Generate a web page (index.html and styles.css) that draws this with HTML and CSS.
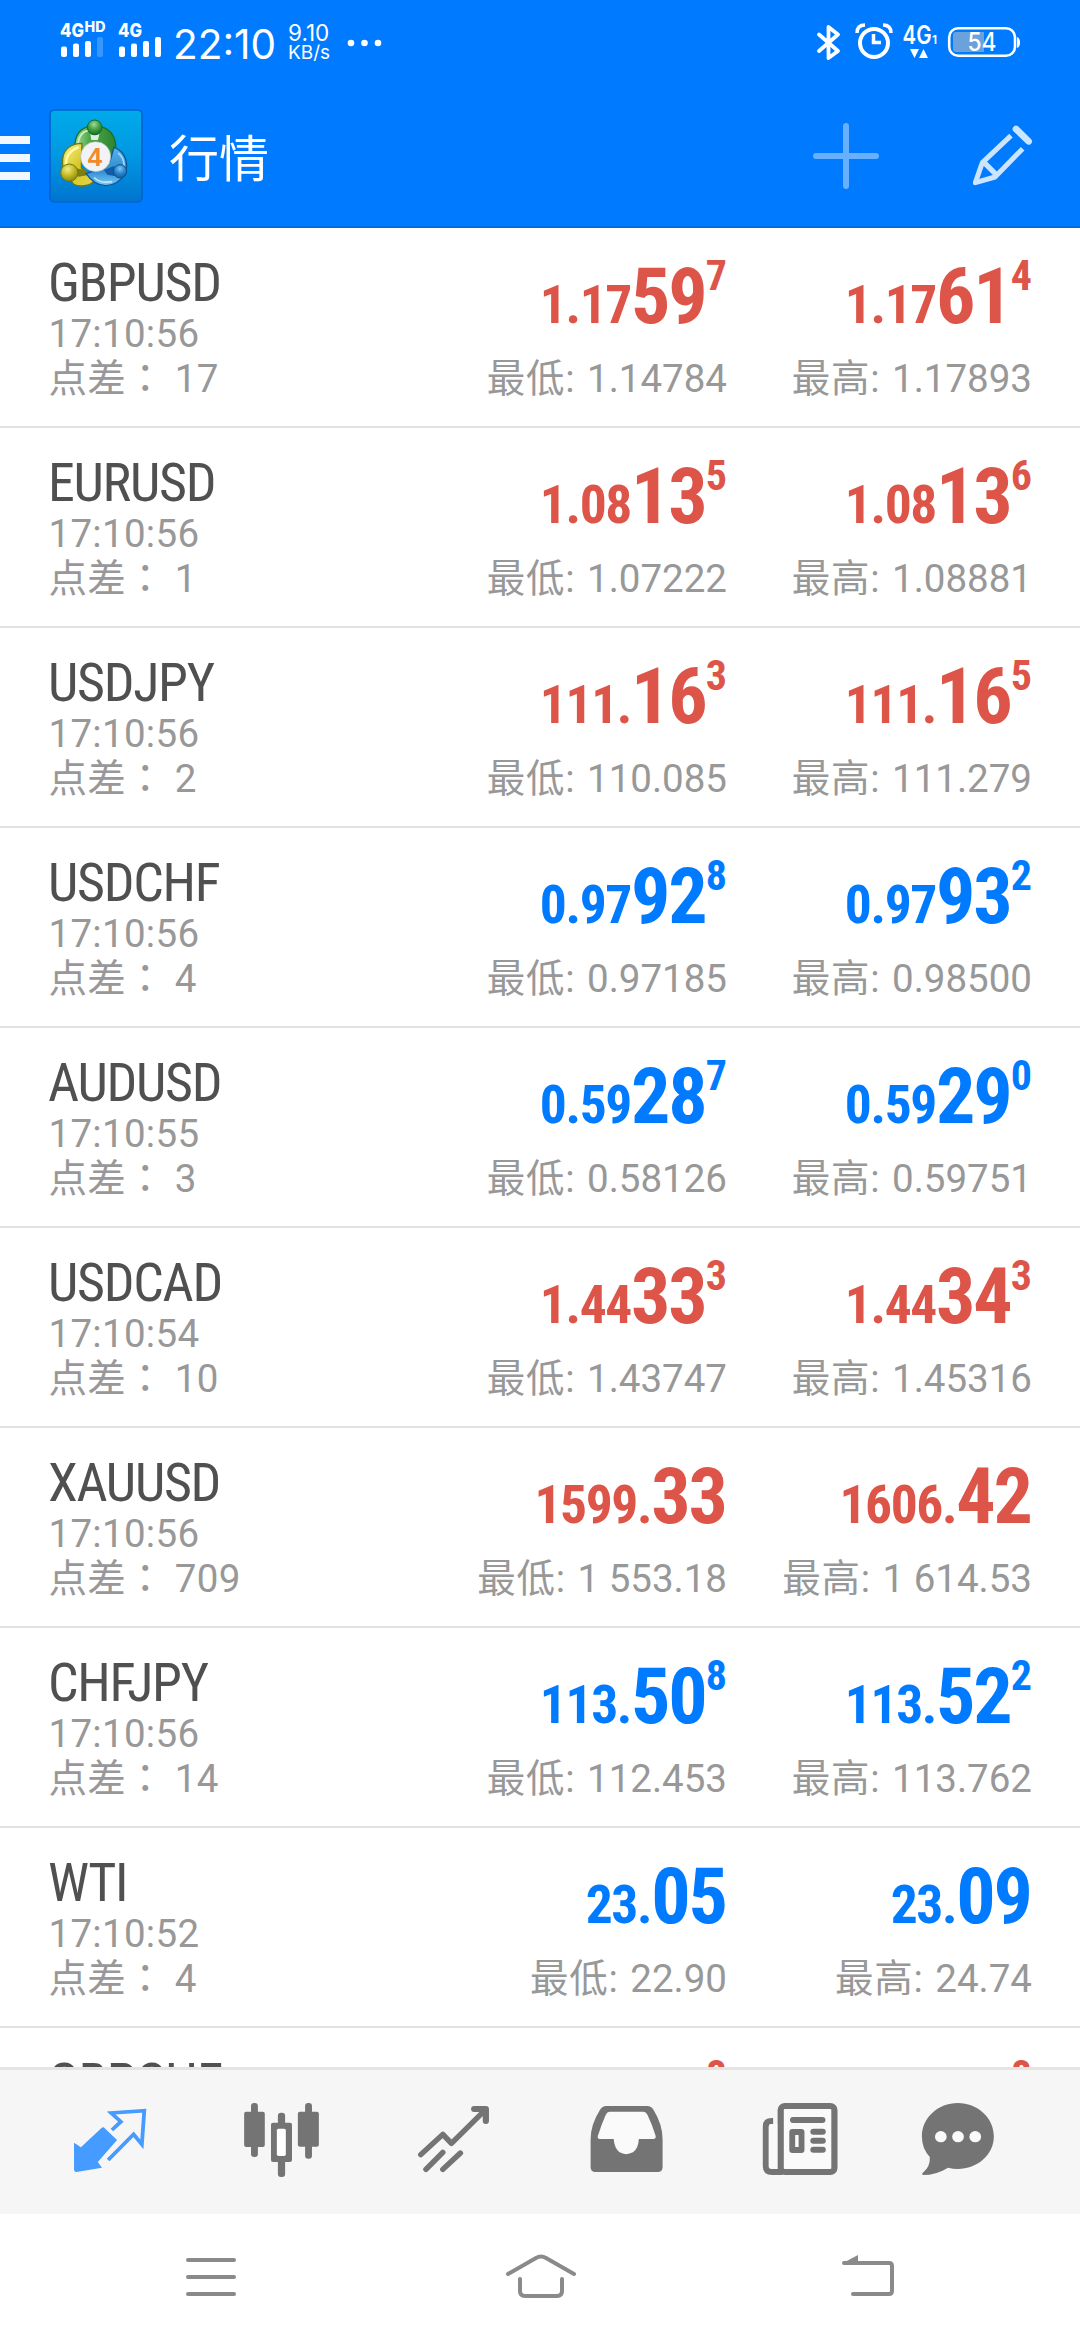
FILE: index.html
```html
<!DOCTYPE html>
<html lang="zh-CN">
<head>
<meta charset="utf-8">
<title>行情</title>
<link rel="stylesheet" href="styles.css">
</head>
<body>
<div class="screen">
  <header class="header">
    <div class="status">
      <svg class="signals" viewBox="50 0 120 84" width="120" height="84">
        <g fill="#fff">
          <g class="net"><text x="60" y="36.5" textLength="24" lengthAdjust="spacingAndGlyphs">4G</text><text x="118" y="36.5" textLength="24" lengthAdjust="spacingAndGlyphs">4G</text></g>
          <text class="hd" x="84.500" y="32" textLength="21" lengthAdjust="spacingAndGlyphs">HD</text>
          <rect x="61" y="46.500" width="6" height="10.500" rx="2"/><rect x="73" y="43.500" width="6" height="13.500" rx="2"/><rect x="85" y="41" width="6" height="16" rx="2"/><rect x="97" y="37" width="6" height="20" rx="2" opacity=".22"/>
          <rect x="119" y="46.500" width="6" height="10.500" rx="2"/><rect x="131" y="43.500" width="6" height="13.500" rx="2"/><rect x="143" y="41" width="6" height="16" rx="2"/><rect x="155" y="37" width="6" height="20" rx="2"/>
        </g>
      </svg>
      <span class="clock">22:10</span>
      <span class="speed"><span class="rate">9.10</span><span>KB/s</span></span>
      <svg class="dots" viewBox="340 0 50 84" width="50" height="84"><g fill="#fff"><circle cx="351" cy="43" r="3.300"/><circle cx="364.500" cy="43" r="3.300"/><circle cx="378" cy="43" r="3.300"/></g></svg>
      <svg class="indicators" viewBox="810 0 220 84" width="220" height="84">
        <path d="M819 34.500 838 51 828.500 58V27L838 34.500 819 51" fill="none" stroke="#fff" stroke-width="3.800" stroke-linejoin="round" stroke-linecap="round"/>
        <circle cx="874" cy="43" r="14" fill="none" stroke="#fff" stroke-width="4"/>
        <path d="M873.500 34v8.500h7.500" fill="none" stroke="#fff" stroke-width="3.500"/>
        <path d="M857 33q0-8 8-8M891 33q0-8-8-8" fill="none" stroke="#fff" stroke-width="3.500"/>
        <text class="lte" x="902.500" y="44" textLength="29" lengthAdjust="spacingAndGlyphs">4G</text>
        <text class="sub" x="932" y="44">1</text>
        <path d="M910 49h9l-4.500 9zM919 58h9l-4.500-9z" fill="#fff"/>
        <path d="M953 35q0-3 3-3h28v20h-28q-3 0-3-3z" fill="#6ba2dc"/>
        <rect x="949.200" y="28.200" width="65.800" height="27.500" rx="9" fill="none" stroke="#fff" stroke-width="2.600"/>
        <path d="M1017 37q3 1 3 5.500t-3 5.500z" fill="#fff"/>
        <text class="charge" x="967.500" y="51" textLength="29" lengthAdjust="spacingAndGlyphs">54</text>
      </svg>
    </div>
    <div class="appbar">
      <svg class="burger" viewBox="0 0 30 44" width="30" height="44"><path d="M0 4h30M0 22h30M0 40h30" stroke="#f1f8ff" stroke-width="8"/></svg>
      <svg class="logo" viewBox="13 13 282 282" width="94" height="94">
        <defs>
          <linearGradient id="bg" x2="0" y2="1"><stop offset="0" stop-color="#00aaea"/><stop offset=".5" stop-color="#0098e2"/><stop offset="1" stop-color="#0074cf"/></linearGradient>
          <radialGradient id="gn" cx=".45" cy=".3" r=".7"><stop offset="0" stop-color="#9fdc98"/><stop offset=".5" stop-color="#46a345"/><stop offset="1" stop-color="#1b6f2b"/></radialGradient>
          <radialGradient id="yl" cx=".4" cy=".3" r=".75"><stop offset="0" stop-color="#f0ee8c"/><stop offset=".5" stop-color="#c6ba25"/><stop offset="1" stop-color="#7d8410"/></radialGradient>
          <radialGradient id="bl" cx=".5" cy=".3" r=".75"><stop offset="0" stop-color="#7cc8f4"/><stop offset=".5" stop-color="#2b86cc"/><stop offset="1" stop-color="#0a559f"/></radialGradient>
          <linearGradient id="gb"><stop offset="0" stop-color="#a5dc98"/><stop offset=".35" stop-color="#4fa848"/><stop offset="1" stop-color="#2c8530"/></linearGradient>
          <linearGradient id="yb" x2="1" y2="1"><stop offset="0" stop-color="#fbf485"/><stop offset=".5" stop-color="#d6c62a"/><stop offset="1" stop-color="#e5d648"/></linearGradient>
          <linearGradient id="bb" x2="0" y2="1"><stop offset="0" stop-color="#59b4ea"/><stop offset=".6" stop-color="#2d8bd0"/><stop offset="1" stop-color="#7cc9f6"/></linearGradient>
        </defs>
        <rect x="16" y="16" width="276" height="276" rx="13" fill="url(#bg)" stroke="#0065cc" stroke-width="5"/>
        <path d="M91 126C90 92 108 70 132 66H168C194 72 214 94 213 128Q212 152 200 168L104 168Q92 150 91 126z" fill="url(#gb)" stroke="#1b6f2d" stroke-width="4"/>
        <path d="M100 117Q104 84 130 77" fill="none" stroke="#d0efc9" stroke-width="5" stroke-linecap="round"/>
        <path d="M112 116C80 116 56 134 54 164Q52 184 60 200L86 238Q104 248 130 241 148 234 154 220L110 190z" fill="url(#yb)" stroke="#6c7913" stroke-width="4"/>
        <path d="M64 178Q64 142 100 128" fill="none" stroke="#fffbb0" stroke-width="7" stroke-linecap="round"/>
        <path d="M88 190 124 196 128 212 101 216z" fill="#7e7d12"/>
        <path d="M208 128C234 138 246 158 246 186L240 210Q218 242 184 243 148 242 124 206L160 196 196 170z" fill="url(#bb)" stroke="#0d569e" stroke-width="4"/>
        <path d="M150 220Q168 237 200 231" fill="none" stroke="#bde6ff" stroke-width="5" stroke-linecap="round"/>
        <path d="M222 146Q238 160 238 182" fill="none" stroke="#a2d9fa" stroke-width="5" stroke-linecap="round"/>
        <path d="M178 196 208 184 210 214 188 210z" fill="#125ca8"/>
        <path d="M137 88Q150 96 164 88L160 106H140z" fill="#dceee1"/>
        <circle cx="150" cy="68" r="22" fill="url(#gn)" stroke="#17672a" stroke-width="3"/>
        <circle cx="74" cy="204" r="26" fill="url(#yl)" stroke="#74780d" stroke-width="3"/>
        <circle cx="226" cy="200" r="20" fill="url(#bl)" stroke="#0b4f91" stroke-width="3"/>
        <circle cx="153" cy="156" r="45" fill="#f2f3f6" stroke="#a9b9bd" stroke-width="2"/>
        <text class="four" x="129" y="183" textLength="43" lengthAdjust="spacingAndGlyphs">4</text>
      </svg>
      <h1 class="title">行情</h1>
      <svg class="plus" viewBox="0 0 66 66" width="66" height="66"><path d="M3 33h60M33 3v60" stroke="#66b0ff" stroke-width="6" stroke-linecap="round"/></svg>
      <svg class="pencil" viewBox="39 30 180 183" width="60" height="61">
        <path d="M153 62 67 143 46 203 105 186 188 101" fill="none" stroke="#cce5ff" stroke-width="15" stroke-linejoin="round"/>
        <path d="M72 142 108 178" stroke="#cce5ff" stroke-width="16"/>
        <path d="M168 42 206 79" stroke="#cce5ff" stroke-width="20" stroke-linecap="round"/>
      </svg>
    </div>
  </header>
  <main class="list">
    <section class="row down"><div class="info"><div class="symbol">GBPUSD</div><div class="meta">17:10:56</div><div class="meta">点差<i lang="zh-Hant">：</i> 17</div></div><div class="quote"><div class="price"><small>1.17</small>59<sup>7</sup></div><div class="meta"><b>最低:</b> 1.14784</div></div><div class="quote"><div class="price"><small>1.17</small>61<sup>4</sup></div><div class="meta"><b>最高:</b> 1.17893</div></div></section>
    <section class="row down"><div class="info"><div class="symbol">EURUSD</div><div class="meta">17:10:56</div><div class="meta">点差<i lang="zh-Hant">：</i> 1</div></div><div class="quote"><div class="price"><small>1.08</small>13<sup>5</sup></div><div class="meta"><b>最低:</b> 1.07222</div></div><div class="quote"><div class="price"><small>1.08</small>13<sup>6</sup></div><div class="meta"><b>最高:</b> 1.08881</div></div></section>
    <section class="row down"><div class="info"><div class="symbol">USDJPY</div><div class="meta">17:10:56</div><div class="meta">点差<i lang="zh-Hant">：</i> 2</div></div><div class="quote"><div class="price"><small>111.</small>16<sup>3</sup></div><div class="meta"><b>最低:</b> 110.085</div></div><div class="quote"><div class="price"><small>111.</small>16<sup>5</sup></div><div class="meta"><b>最高:</b> 111.279</div></div></section>
    <section class="row up"><div class="info"><div class="symbol">USDCHF</div><div class="meta">17:10:56</div><div class="meta">点差<i lang="zh-Hant">：</i> 4</div></div><div class="quote"><div class="price"><small>0.97</small>92<sup>8</sup></div><div class="meta"><b>最低:</b> 0.97185</div></div><div class="quote"><div class="price"><small>0.97</small>93<sup>2</sup></div><div class="meta"><b>最高:</b> 0.98500</div></div></section>
    <section class="row up"><div class="info"><div class="symbol">AUDUSD</div><div class="meta">17:10:55</div><div class="meta">点差<i lang="zh-Hant">：</i> 3</div></div><div class="quote"><div class="price"><small>0.59</small>28<sup>7</sup></div><div class="meta"><b>最低:</b> 0.58126</div></div><div class="quote"><div class="price"><small>0.59</small>29<sup>0</sup></div><div class="meta"><b>最高:</b> 0.59751</div></div></section>
    <section class="row down"><div class="info"><div class="symbol">USDCAD</div><div class="meta">17:10:54</div><div class="meta">点差<i lang="zh-Hant">：</i> 10</div></div><div class="quote"><div class="price"><small>1.44</small>33<sup>3</sup></div><div class="meta"><b>最低:</b> 1.43747</div></div><div class="quote"><div class="price"><small>1.44</small>34<sup>3</sup></div><div class="meta"><b>最高:</b> 1.45316</div></div></section>
    <section class="row down"><div class="info"><div class="symbol">XAUUSD</div><div class="meta">17:10:56</div><div class="meta">点差<i lang="zh-Hant">：</i> 709</div></div><div class="quote"><div class="price whole"><small>1599.</small>33</div><div class="meta"><b>最低:</b> 1 553.18</div></div><div class="quote"><div class="price whole"><small>1606.</small>42</div><div class="meta"><b>最高:</b> 1 614.53</div></div></section>
    <section class="row up"><div class="info"><div class="symbol">CHFJPY</div><div class="meta">17:10:56</div><div class="meta">点差<i lang="zh-Hant">：</i> 14</div></div><div class="quote"><div class="price"><small>113.</small>50<sup>8</sup></div><div class="meta"><b>最低:</b> 112.453</div></div><div class="quote"><div class="price"><small>113.</small>52<sup>2</sup></div><div class="meta"><b>最高:</b> 113.762</div></div></section>
    <section class="row up"><div class="info"><div class="symbol">WTI</div><div class="meta">17:10:52</div><div class="meta">点差<i lang="zh-Hant">：</i> 4</div></div><div class="quote"><div class="price whole"><small>23.</small>05</div><div class="meta"><b>最低:</b> 22.90</div></div><div class="quote"><div class="price whole"><small>23.</small>09</div><div class="meta"><b>最高:</b> 24.74</div></div></section>
    <section class="row down"><div class="info"><div class="symbol">GBPCHF</div></div><div class="quote"><div class="price"><small>1.15</small>15<sup>8</sup></div></div><div class="quote"><div class="price"><small>1.15</small>18<sup>8</sup></div></div></section>
  </main>
  <nav class="tabs">
    <svg viewBox="69.700 90 499.500 432" preserveAspectRatio="none">
      <path d="M301 262 340 300 284 366 296 383 222 396q-7 0-7-7V308l20 14 59-57q4-4 7-3z" fill="#459bff"/>
      <path d="M325 270 351 245 323 219 419 212 412 313 388 283 314 360" fill="none" stroke="#459bff" stroke-width="11"/>
    </svg>
    <svg viewBox="569.200 90 499.500 432" preserveAspectRatio="none">
      <g fill="#747474"><rect x="729" y="189" width="20" height="162" rx="9"/><rect x="709" y="215" width="60" height="106" rx="6"/><rect x="886" y="189" width="20" height="167" rx="9"/><rect x="865" y="215" width="61" height="105" rx="6"/><rect x="807" y="218" width="21" height="193" rx="9"/><rect x="787" y="248" width="61" height="118" rx="6"/></g><rect x="804" y="266" width="26" height="82" rx="5" fill="#fff"/>
    </svg>
    <svg viewBox="1068.700 90 499.500 432" preserveAspectRatio="none">
      <g fill="none" stroke="#747474" stroke-width="16" stroke-linecap="round" stroke-linejoin="round"><path d="M1222 344 1286 283 1311 310 1410 209"/><path d="M1377 207h34v36" stroke-width="18"/><path d="M1237 388 1286 337M1286 388 1337 339"/></g>
    </svg>
    <svg viewBox="0 90 499.500 432" preserveAspectRatio="none">
      <path d="M192 198H312q11 0 18 12Q356 254 356 298v84q0 14-14 14H161q-14 0-14-14V298q0-44 27-88 7-12 18-12z" fill="#747474"/><path d="M202 215h98q8 0 12 9 14 30 24 64 1 9-7 9h-42q-1 28-17 40-20 11-39 0-15-12-17-40h-40q-8 0-6-9 10-34 23-64 4-9 11-9z" fill="#fafafa"/>
    </svg>
    <svg viewBox="499.500 90 499.500 432" preserveAspectRatio="none">
      <g fill="none" stroke="#747474" stroke-width="18"><rect x="699" y="198" width="156" height="198" rx="12" fill="#fafafa"/><path d="M677 243h-4q-17 0-17 16V378q0 18 18 18h30"/><path d="M735 240h85M794 275h27M794 302h27M794 329h27" stroke-linecap="round"/></g><path d="M664 262q0-10 10-10h15v134h-18q-7 0-7-8z" fill="#fafafa"/><rect x="724" y="267" width="44" height="72" rx="9" fill="#747474"/><rect x="741" y="285" width="10" height="36" fill="#fafafa"/>
    </svg>
    <svg viewBox="999 90 499.500 432" preserveAspectRatio="none">
      <path d="M1213 189C1270 189 1318 233 1318 289S1270 387 1213 387q-14 0-28-4-34 22-73 22-5-3 0-7 22-18 20-47-23-25-23-62C1109 233 1157 189 1213 189z" fill="#747474"/><g fill="#fafafa"><circle cx="1164" cy="290" r="17"/><circle cx="1214" cy="290" r="17"/><circle cx="1264" cy="290" r="17"/></g>
    </svg>
  </nav>
  <footer class="sysnav">
    <svg viewBox="186 0 50 126" width="50" height="126"><path d="M188 46h46M188 63h46M188 80h46" stroke="#8a8a8a" stroke-width="4" stroke-linecap="round"/></svg>
    <svg class="home" viewBox="504 0 74 126" width="74" height="126"><path d="M508 60 536 44q5-3 10 0L574 60M520 65v12q0 5 5 5h32q5 0 5-5V65" fill="none" stroke="#8a8a8a" stroke-width="4" stroke-linecap="round"/></svg>
    <svg class="back" viewBox="840 0 58 126" width="58" height="126"><path d="M844 49h45q3 0 3 3v25q0 3-3 3h-36" fill="none" stroke="#8a8a8a" stroke-width="4" stroke-linecap="round"/><path d="M843 49 858 41v8z" fill="#8a8a8a"/></svg>
  </footer>
</div>
</body>
</html>
```
FILE: styles.css
```css
* { box-sizing: border-box; }
body { margin: 0; background: #fff; font-family: Roboto, "Noto Sans CJK SC", sans-serif; }
svg { display: block; flex: none; }
.screen { width: 1080px; height: 2340px; display: flex; flex-direction: column; overflow: hidden; }

.header { height: 228px; flex: none; background: #007aff; border-bottom: 2px solid #006be0; color: #fff; }
.status { height: 84px; display: flex; padding-left: 50px; font-family: Inter, sans-serif; }
.status text { fill: #fff; }
.net { font-size: 19px; font-weight: 800; }
.hd { font-size: 14px; font-weight: 800; }
.clock { width: 118px; padding-left: 3px; font-size: 40.5px; line-height: 90px; white-space: nowrap; }
.speed { width: 52px; padding-top: 23px; display: flex; flex-direction: column; font-size: 19px; line-height: 20px; }
.rate { font-size: 22.5px; }
.indicators { margin-left: 420px; }
.lte { font-size: 25px; font-weight: 600; }
.sub { font-size: 12px; font-weight: 600; }
.charge { font-size: 25px; font-weight: 500; }
.appbar { height: 142px; display: flex; align-items: center; }
.burger { margin-top: 6px; }
.logo { margin-left: 19px; margin-top: 1px; }
.four { font: 700 76px "Liberation Sans", sans-serif; fill: #f08a2c; }
.title { margin: 0 0 0 26px; font: 400 50px/70px "Noto Sans CJK SC", sans-serif; }
.plus { margin: 2px 0 0 auto; }
.pencil { margin: 1px 47px 0 94px; }

.list { flex: 1; min-height: 0; overflow: hidden; background: #fff; }
.row { height: 200px; display: flex; padding: 26px 48px 0 49px; border-bottom: 2px solid #e2e2e2; }
.info { flex: 1; }
.symbol { margin-left: -1px; font-family: "Roboto Condensed", Roboto, sans-serif; font-stretch: 75%; font-weight: 450; font-size: 54px; letter-spacing: -1.3px; line-height: 58px; color: #505050; }
.meta { font-size: 38.5px; line-height: 44.5px; color: #989898; white-space: pre; }
.info .meta { margin-left: -.5px; letter-spacing: .3px; }
.meta i { font-style: normal; font-family: "Noto Sans CJK TC", sans-serif; line-height: 0; }
.meta b { font-weight: 400; letter-spacing: .8px; margin-right: 2px; }
.quote { width: 305px; text-align: right; }
.price { height: 102.5px; padding-top: 3px; font-family: "Roboto Condensed", Roboto, sans-serif; font-stretch: 75%; font-weight: 700; font-size: 78px; letter-spacing: -2px; line-height: 80px; white-space: nowrap; }
.price small { font-size: 53.5px; letter-spacing: -1.4px; line-height: 0; }
.price sup { font-size: 42px; letter-spacing: 0; line-height: 0; vertical-align: 33px; }
.whole { padding-right: 1px; }
.down .price { color: #dd5548; }
.up .price { color: #007aff; }

.tabs { height: 147px; flex: none; display: flex; padding-left: 24px; background: #f6f6f6; border-top: 3px solid #e4e4e4; }
.tabs svg { width: 172px; height: 144px; }
.sysnav { height: 126px; flex: none; display: flex; padding-left: 186px; background: #fff; }
.home { margin-left: 268px; }
.back { margin-left: 262px; }
```
